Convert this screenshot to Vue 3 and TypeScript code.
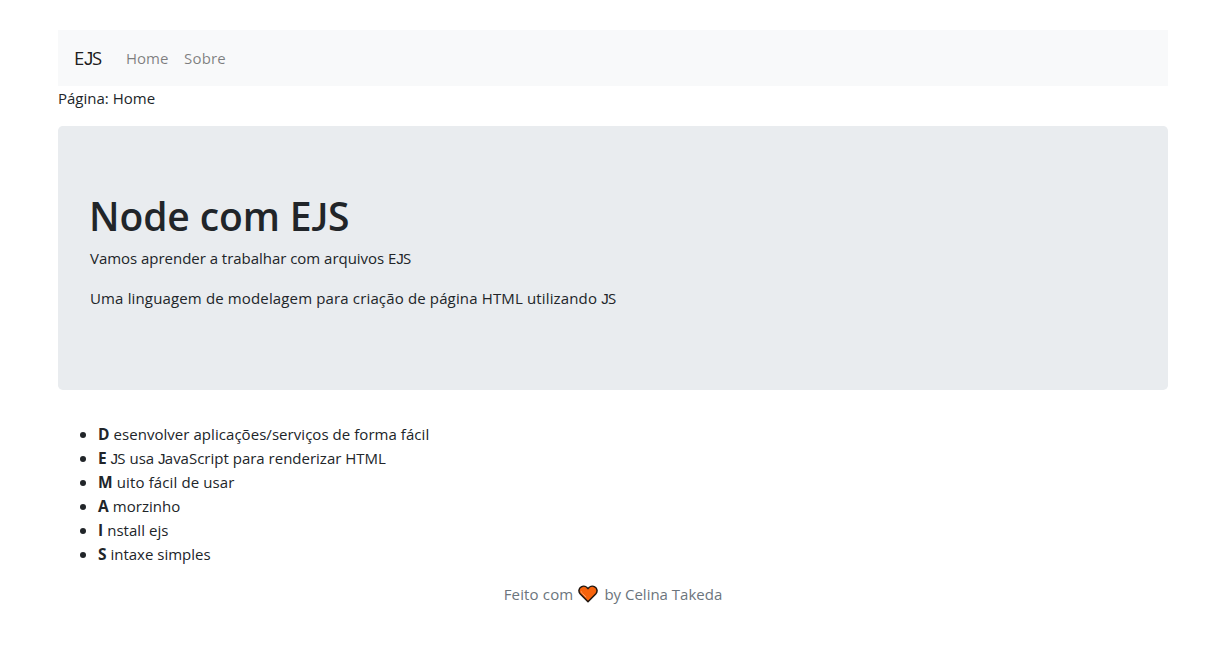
<script setup lang="ts">
interface Item {
  lead: string
  rest: string
  key: string
}

const links: string[] = ['Home', 'Sobre']
const items: Item[] = [
  { key: 'd', lead: 'D', rest: 'esenvolver aplicações/serviços de forma fácil' },
  { key: 'e', lead: 'E', rest: 'JS usa JavaScript para renderizar HTML' },
  { key: 'm', lead: 'M', rest: 'uito fácil de usar' },
  { key: 'a', lead: 'A', rest: 'morzinho' },
  { key: 'i', lead: 'I', rest: 'nstall ejs' },
  { key: 's', lead: 'S', rest: 'intaxe simples' },
]

// Splits around each capital J, which is set in a face where it sits on the baseline.
const parts = (text: string): string[] => text.split(/(J)/).filter(Boolean)
</script>

<template>
  <div class="container">
    <header>
      <nav class="navbar">
        <a class="brand"><span v-for="(t, n) in parts('EJS')" :key="n" :class="{ jay: t === 'J' }">{{ t }}</span></a>
        <a v-for="link in links" :key="link" class="nav-link" :class="link.toLowerCase()">{{ link }}</a>
      </nav>
    </header>
    <main>
      <p class="page">Página: Home</p>
      <section class="jumbotron">
        <h1><span v-for="(t, n) in parts('Node com EJS')" :key="n" :class="{ jay: t === 'J' }">{{ t }}</span></h1>
        <p class="intro"><span v-for="(t, n) in parts('Vamos aprender a trabalhar com arquivos EJS')" :key="n" :class="{ jay: t === 'J' }">{{ t }}</span></p>
        <p class="about"><span v-for="(t, n) in parts('Uma linguagem de modelagem para criação de página HTML utilizando JS')" :key="n" :class="{ jay: t === 'J' }">{{ t }}</span></p>
      </section>
      <ul>
        <li v-for="item in items" :key="item.key" :class="item.key"><strong>{{ item.lead }}</strong>&#32;<span v-for="(t, n) in parts(item.rest)" :key="n" :class="{ jay: t === 'J' }">{{ t }}</span></li>
      </ul>
    </main>
    <footer>
      <span class="made">Feito com</span>
      <svg class="heart" viewBox="0 0 20 18" aria-hidden="true">
        <path d="M10 16.7 2.3 9C.1 6.7.7 3.2 3.3 1.8 5.7.5 8.5 1.4 10 3.7c1.5-2.3 4.3-3.2 6.7-1.9 2.6 1.4 3.2 4.9 1 7.2Z" fill="#f7630c" stroke="#20160f" stroke-width="1.5" stroke-linejoin="round" />
        <path d="M3.4 6.7c.2 1 .8 1.5 1.5 2.2l3 3" fill="none" stroke="#ff9b66" stroke-width="1" stroke-linecap="round" />
      </svg>
      <span class="author">by Celina Takeda</span>
    </footer>
  </div>
</template>

<style>
body {
  margin: 0;
  background: #fff;
}
</style>

<style scoped>
.container {
  box-sizing: border-box;
  width: 1140px;
  margin: 0 auto;
  padding: 30px 15px 0;
  color: #212529;
  font-family: "Open Sans", "Noto Sans", sans-serif;
  font-size: 15px;
  font-weight: 400;
  line-height: 24px;
}
.jay {
  margin-right: -0.05em;
  font-family: "Liberation Sans", sans-serif;
  line-height: 1;
}
h1 .jay {
  margin: 0;
  font-family: Lato, sans-serif;
}
p {
  margin: 0 0 16px;
  white-space: nowrap;
}
.navbar {
  display: flex;
  align-items: center;
  box-sizing: border-box;
  height: 56px;
  padding: 8px 16px;
  background: #f8f9fa;
}
.brand {
  width: 28px;
  margin-right: 16px;
  color: rgba(0, 0, 0, 0.9);
  font-size: 18.5px;
  letter-spacing: -0.3px;
  line-height: 30px;
  white-space: nowrap;
}
.nav-link {
  width: 42px;
  padding: 8px;
  color: rgba(0, 0, 0, 0.5);
  white-space: nowrap;
}
.sobre {
  letter-spacing: 0.2px;
}
.jumbotron {
  padding: 64px 32px;
  margin-bottom: 32px;
  border-radius: 4.8px;
  background: #e9ecef;
}
h1 {
  margin: 0 0 0 -1px;
  padding-top: 2px;
  height: 54px;
  font-size: 39px;
  font-weight: 600;
  letter-spacing: -0.1px;
  line-height: 48px;
}
.intro {
  letter-spacing: -0.03px;
}
.about {
  letter-spacing: 0.145px;
}
ul {
  margin: 0 0 16px;
  padding-left: 40px;
}
li {
  letter-spacing: 0.05px;
}
li::marker {
  font-size: 16px;
}
.e,
.s {
  letter-spacing: 0;
}
.m {
  letter-spacing: 0.12px;
}
strong {
  font-size: 15.5px;
  font-weight: 700;
  line-height: 1;
}
footer {
  display: flex;
  justify-content: center;
  color: #6c757d;
}
.made {
  letter-spacing: 0.15px;
}
.heart {
  width: 20px;
  height: 18px;
  margin: 3px 6px 0 5px;
}
</style>
